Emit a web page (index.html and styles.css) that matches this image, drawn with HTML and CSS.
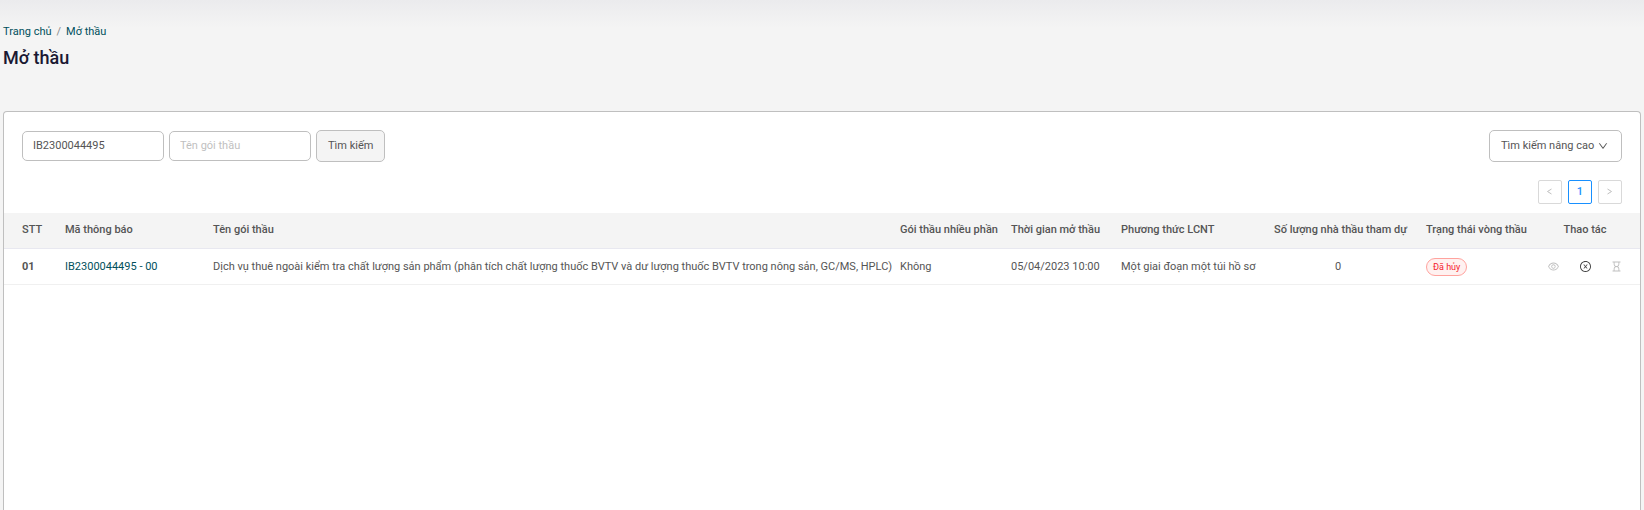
FILE: index.html
```html
<!DOCTYPE html>
<html lang="vi">
<head>
<meta charset="utf-8">
<meta name="viewport" content="width=device-width, initial-scale=1">
<title>Mở thầu</title>
<link rel="stylesheet" href="styles.css">
</head>
<body>
<header class="page-header">
  <nav class="breadcrumb" aria-label="Breadcrumb">
    <a href="#">Trang chủ</a><span class="separator">/</span><a href="#">Mở thầu</a>
  </nav>
  <h1 class="title">Mở thầu</h1>
</header>
<main class="card">
  <form class="toolbar">
    <input class="field" type="text" aria-label="Mã thông báo" value="IB2300044495">
    <input class="field" type="text" aria-label="Tên gói thầu" placeholder="Tên gói thầu">
    <button class="button button-search" type="submit">Tìm kiếm</button>
    <button class="button button-advanced" type="button">Tìm kiếm nâng cao
      <svg class="icon-down" viewBox="64 64 896 896" aria-hidden="true"><path d="M884 256h-75c-5.100 0-9.900 2.500-12.900 6.600L512 654.200 227.900 262.600c-3-4.100-7.800-6.600-12.900-6.600h-75c-6.500 0-10.300 7.400-6.500 12.700l352.600 486.100c12.800 17.600 39 17.600 51.700 0l352.600-486.100c3.900-5.300.1-12.700-6.400-12.700z"/></svg>
    </button>
  </form>
  <nav class="pagination" aria-label="Phân trang">
    <button class="page" type="button" disabled aria-label="Trang trước"><svg viewBox="0 0 10 10" aria-hidden="true"><path d="M6.500 2L2.500 4.500L6.500 7"/></svg></button>
    <button class="page page-current" type="button" aria-current="page">1</button>
    <button class="page" type="button" disabled aria-label="Trang sau"><svg viewBox="0 0 10 10" aria-hidden="true"><path d="M2.500 2L6.500 4.500L2.500 7"/></svg></button>
  </nav>
  <table class="bids">
    <colgroup>
      <col class="col-index"><col class="col-code"><col><col class="col-lots"><col class="col-time"><col class="col-method"><col class="col-count"><col class="col-status"><col class="col-actions">
    </colgroup>
    <thead>
      <tr>
        <th>STT</th>
        <th>Mã thông báo</th>
        <th>Tên gói thầu</th>
        <th>Gói thầu nhiều phần</th>
        <th>Thời gian mở thầu</th>
        <th>Phương thức LCNT</th>
        <th class="center">Số lượng nhà thầu tham dự</th>
        <th>Trạng thái vòng thầu</th>
        <th class="center">Thao tác</th>
      </tr>
    </thead>
    <tbody>
      <tr>
        <td class="index">01</td>
        <td><a class="code" href="#">IB2300044495 - 00</a></td>
        <td>Dịch vụ thuê ngoài kiểm tra chất lượng sản phẩm (phân tích chất lượng thuốc BVTV và dư lượng thuốc BVTV trong nông sản, GC/MS, HPLC)</td>
        <td>Không</td>
        <td>05/04/2023 10:00</td>
        <td>Một giai đoạn một túi hồ sơ</td>
        <td class="center">0</td>
        <td><span class="tag">Đã hủy</span></td>
        <td>
          <div class="actions">
            <button class="action" type="button" disabled aria-label="Xem"><svg viewBox="64 64 896 896" aria-hidden="true"><path d="M942.200 486.200C847.400 286.500 704.100 186 512 186c-192.200 0-335.400 100.500-430.200 300.300a60.300 60.300 0 0 0 0 51.500C176.600 737.500 319.900 838 512 838c192.200 0 335.400-100.500 430.200-300.300 7.700-16.200 7.700-35 0-51.500zM512 766c-161.300 0-279.400-81.800-362.700-254C232.600 339.800 350.700 258 512 258c161.300 0 279.400 81.800 362.700 254C791.500 684.200 673.400 766 512 766zm-4-430c-97.200 0-176 78.800-176 176s78.800 176 176 176 176-78.800 176-176-78.800-176-176-176zm0 288c-61.900 0-112-50.100-112-112s50.100-112 112-112 112 50.100 112 112-50.100 112-112 112z"/></svg></button>
            <button class="action" type="button" aria-label="Hủy"><svg viewBox="64 64 896 896" aria-hidden="true"><path d="M685.400 354.800c0-4.400-3.600-8-8-8l-66 .3L512 465.600l-99.300-118.400-66.100-.3c-4.400 0-8 3.500-8 8 0 1.900.7 3.700 1.900 5.200l130.100 155L340.500 670a8.320 8.320 0 0 0-1.900 5.200c0 4.400 3.600 8 8 8l66.100-.3L512 564.400l99.300 118.400 66 .3c4.400 0 8-3.500 8-8 0-1.900-.7-3.700-1.900-5.200L553.500 515l130.100-155c1.200-1.400 1.800-3.300 1.800-5.200z"/><path d="M512 65C264.600 65 64 265.600 64 513s200.600 448 448 448 448-200.600 448-448S759.400 65 512 65zm0 820c-205.400 0-372-166.600-372-372s166.600-372 372-372 372 166.600 372 372-166.600 372-372 372z"/></svg></button>
            <button class="action" type="button" disabled aria-label="Chờ"><svg viewBox="64 64 896 896" aria-hidden="true"><path d="M742 318V184h86c4.400 0 8-3.600 8-8v-56c0-4.400-3.600-8-8-8H196c-4.400 0-8 3.600-8 8v56c0 4.400 3.600 8 8 8h86v134c0 81.500 42.400 153.200 106.400 194-64 40.800-106.400 112.500-106.400 194v134h-86c-4.400 0-8 3.600-8 8v56c0 4.400 3.600 8 8 8h632c4.400 0 8-3.600 8-8v-56c0-4.400-3.600-8-8-8h-86V706c0-81.500-42.400-153.200-106.400-194 64-40.800 106.400-112.500 106.400-194zm-72 388v134H354V706c0-42.200 16.400-81.900 46.300-111.700C430.100 564.400 469.800 548 512 548s81.900 16.400 111.700 46.300C653.600 624.100 670 663.800 670 706zm0-388c0 42.200-16.400 81.900-46.300 111.700C593.900 459.600 554.200 476 512 476s-81.900-16.400-111.700-46.300A156.630 156.630 0 0 1 354 318V184h316v134z"/></svg></button>
          </div>
        </td>
      </tr>
    </tbody>
  </table>
</main>
</body>
</html>
```

FILE: styles.css
```css
* {
  box-sizing: border-box;
}

body {
  display: flex;
  flex-direction: column;
  min-height: 100vh;
  margin: 0;
  padding: 0 3px;
  background: #f4f4f4 linear-gradient(#ebebed, #f4f4f4) no-repeat 0 0 / 100% 28px;
  color: #555;
  font: 11px/16px Roboto, sans-serif;
}

button,
input {
  margin: 0;
  color: inherit;
  font: inherit;
}

a {
  color: #00505c;
  text-decoration: none;
}

.page-header {
  padding: 24px 0 41px;
}

.separator {
  margin: 0 5px;
  color: #888;
}

.title {
  margin: 6px 0 0;
  color: #1a1833;
  font-size: 18px;
  font-weight: 500;
  line-height: 24px;
}

.card {
  flex: 1;
  border: 1px solid #bfbfbf;
  border-bottom: 0;
  border-radius: 4px 4px 0 0;
  background: #fff;
}

.toolbar {
  display: flex;
  align-items: center;
  gap: 5px;
  padding: 18px 18px 0;
}

.field,
.button {
  border: 1px solid #bfbfbf;
  border-radius: 5px;
  background: #fff;
}

.field {
  width: 142px;
  height: 30px;
  padding: 0 10px 2px;
}

.field::placeholder {
  color: #bfbfbf;
}

.button {
  display: flex;
  align-items: center;
  justify-content: center;
  gap: 4px;
  height: 32px;
  padding: 0 11px;
  white-space: nowrap;
}

.button-search {
  background: #f4f4f4;
}

.button-advanced {
  width: 133px;
  justify-content: flex-start;
  margin-left: auto;
}

.icon-down {
  flex: none;
  width: 10px;
  height: 10px;
  fill: currentColor;
}

.pagination {
  display: flex;
  justify-content: flex-end;
  gap: 6px;
  padding: 18px 18px 9px;
}

.page {
  display: grid;
  place-items: center;
  width: 24px;
  height: 24px;
  padding: 0;
  border: 1px solid #d9d9d9;
  border-radius: 2px;
  background: #fff;
}

.page svg {
  width: 10px;
  height: 10px;
  fill: none;
  stroke: #bfbfbf;
}

.page-current {
  border-color: #1890ff;
  color: #1890ff;
  font-weight: 500;
}

.bids {
  width: 100%;
  table-layout: fixed;
  border-collapse: separate;
  border-spacing: 0;
  white-space: nowrap;
}

.bids th,
.bids td {
  height: 36px;
  padding: 0 12px;
  border-bottom: 1px solid #f0f0f0;
  text-align: left;
}

.bids th {
  padding-bottom: 1px;
  border-color: #e8e8f0;
  background: #f4f4f4;
  font-weight: 500;
}

.bids th:first-child,
.bids td:first-child {
  padding-left: 18px;
}

.bids .center {
  text-align: center;
}

.col-index { width: 49px; }
.col-code { width: 148px; }
.col-lots { width: 111px; }
.col-time { width: 110px; }
.col-method { width: 153px; }
.col-count { width: 152px; }
.col-status { width: 116px; }
.col-actions { width: 110px; }

.index {
  font-weight: 700;
}

.tag {
  display: inline-block;
  padding: 0 6px;
  border: 1px solid #ffa39e;
  border-radius: 9px;
  background: #fff1f0;
  color: #f5222d;
  font-size: 9px;
}

.actions {
  display: flex;
  justify-content: space-between;
  padding: 0 6px;
}

.action {
  display: flex;
  padding: 0;
  border: 0;
  background: none;
}

.action svg {
  width: 11px;
  height: 11px;
  fill: #444;
}

.action:disabled svg {
  fill: #bfbfbf;
}
```
